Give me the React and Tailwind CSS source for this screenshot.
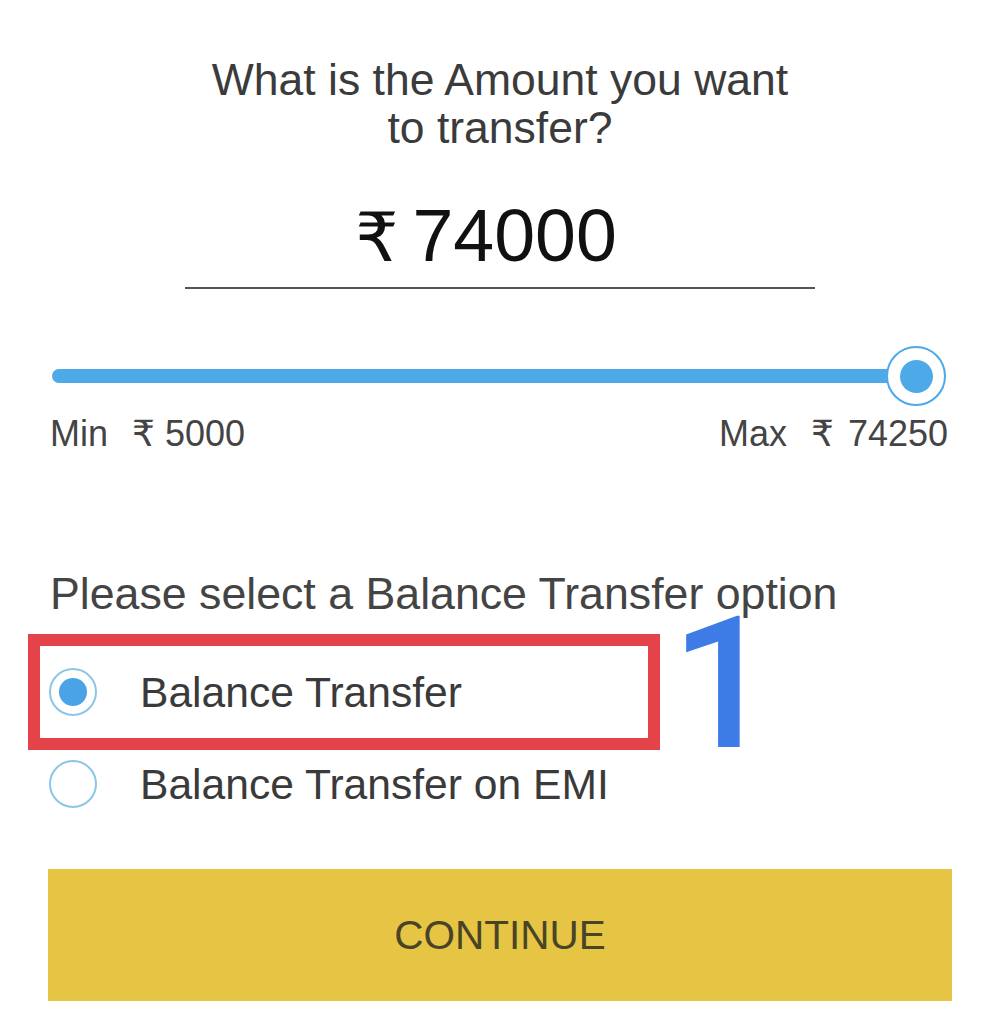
import React from "react";

function Radio({ checked }) {
  return (
    <div className="w-[48px] h-[48px] rounded-full border-2 border-[#8cc6e6] bg-white flex items-center justify-center shrink-0">
      {checked && <div className="w-[28px] h-[28px] rounded-full bg-[#4aa3e6]" />}
    </div>
  );
}

export default function App() {
  return (
    <div
      className="w-[1000px] h-[1024px] bg-white flex flex-col overflow-hidden"
      style={{ fontFamily: '"Liberation Sans", "DejaVu Sans", Arial, sans-serif' }}
    >
      <div className="mt-[56px] text-center text-[44.5px] leading-[48px] text-[#3b3b3b]">
        What is the Amount you want
        <br />
        to transfer?
      </div>

      <div className="mt-[47px] pr-[28px] flex justify-center items-baseline leading-[74px] text-[#111]">
        <span className="text-[68px]">₹</span>
        <span className="ml-[14px] text-[73.5px]">74000</span>
      </div>
      <div className="mt-[13px] mx-auto w-[630px] h-[2px] bg-[#555]" />

      <div className="mt-[57px] ml-[52px] w-[894px] h-[60px] relative flex items-center">
        <div className="w-[870px] h-[14px] rounded-full bg-[#4da9e8]" />
        <div className="absolute right-0 top-0 w-[60px] h-[60px] rounded-full bg-white border-2 border-[#4da9e8] flex items-center justify-center">
          <div className="w-[33px] h-[33px] rounded-full bg-[#4da9e8]" />
        </div>
      </div>

      <div className="mt-[10px] ml-[50px] w-[898px] flex justify-between text-[36px] leading-[36px] text-[#444]">
        <div className="flex">
          <span>Min</span>
          <span className="ml-[24px]">₹</span>
          <span className="ml-[10px]">5000</span>
        </div>
        <div className="flex">
          <span>Max</span>
          <span className="ml-[24px]">₹</span>
          <span className="ml-[14px]">74250</span>
        </div>
      </div>

      <div className="mt-[118px] ml-[50px] text-[44.7px] leading-[48px] text-[#444]">
        Please select a Balance Transfer option
      </div>

      <div className="relative">
        <div className="mt-[16px] ml-[28px] w-[632px] h-[116px] border-[12px] border-[#e4434a] flex items-center pl-[9px]">
          <Radio checked />
          <span className="ml-[43px] text-[42.6px] leading-[48px] text-[#3a3a3a]">Balance Transfer</span>
        </div>
        <div
          className="absolute left-[671px] top-[-25px] text-[183px] leading-[183px] font-medium text-[#3d7be6]"
          style={{ fontFamily: 'Roboto, "Liberation Sans", sans-serif' }}
        >
          1
        </div>
      </div>

      <div className="mt-[10px] ml-[49px] h-[48px] flex items-center">
        <Radio />
        <span className="ml-[43px] text-[42.6px] leading-[48px] text-[#3a3a3a]">Balance Transfer on EMI</span>
      </div>

      <button className="mt-[61px] ml-[48px] w-[904px] h-[132px] bg-[#e6c444] flex items-center justify-center text-[40.5px] text-[#4a4427]">
        CONTINUE
      </button>
    </div>
  );
}
